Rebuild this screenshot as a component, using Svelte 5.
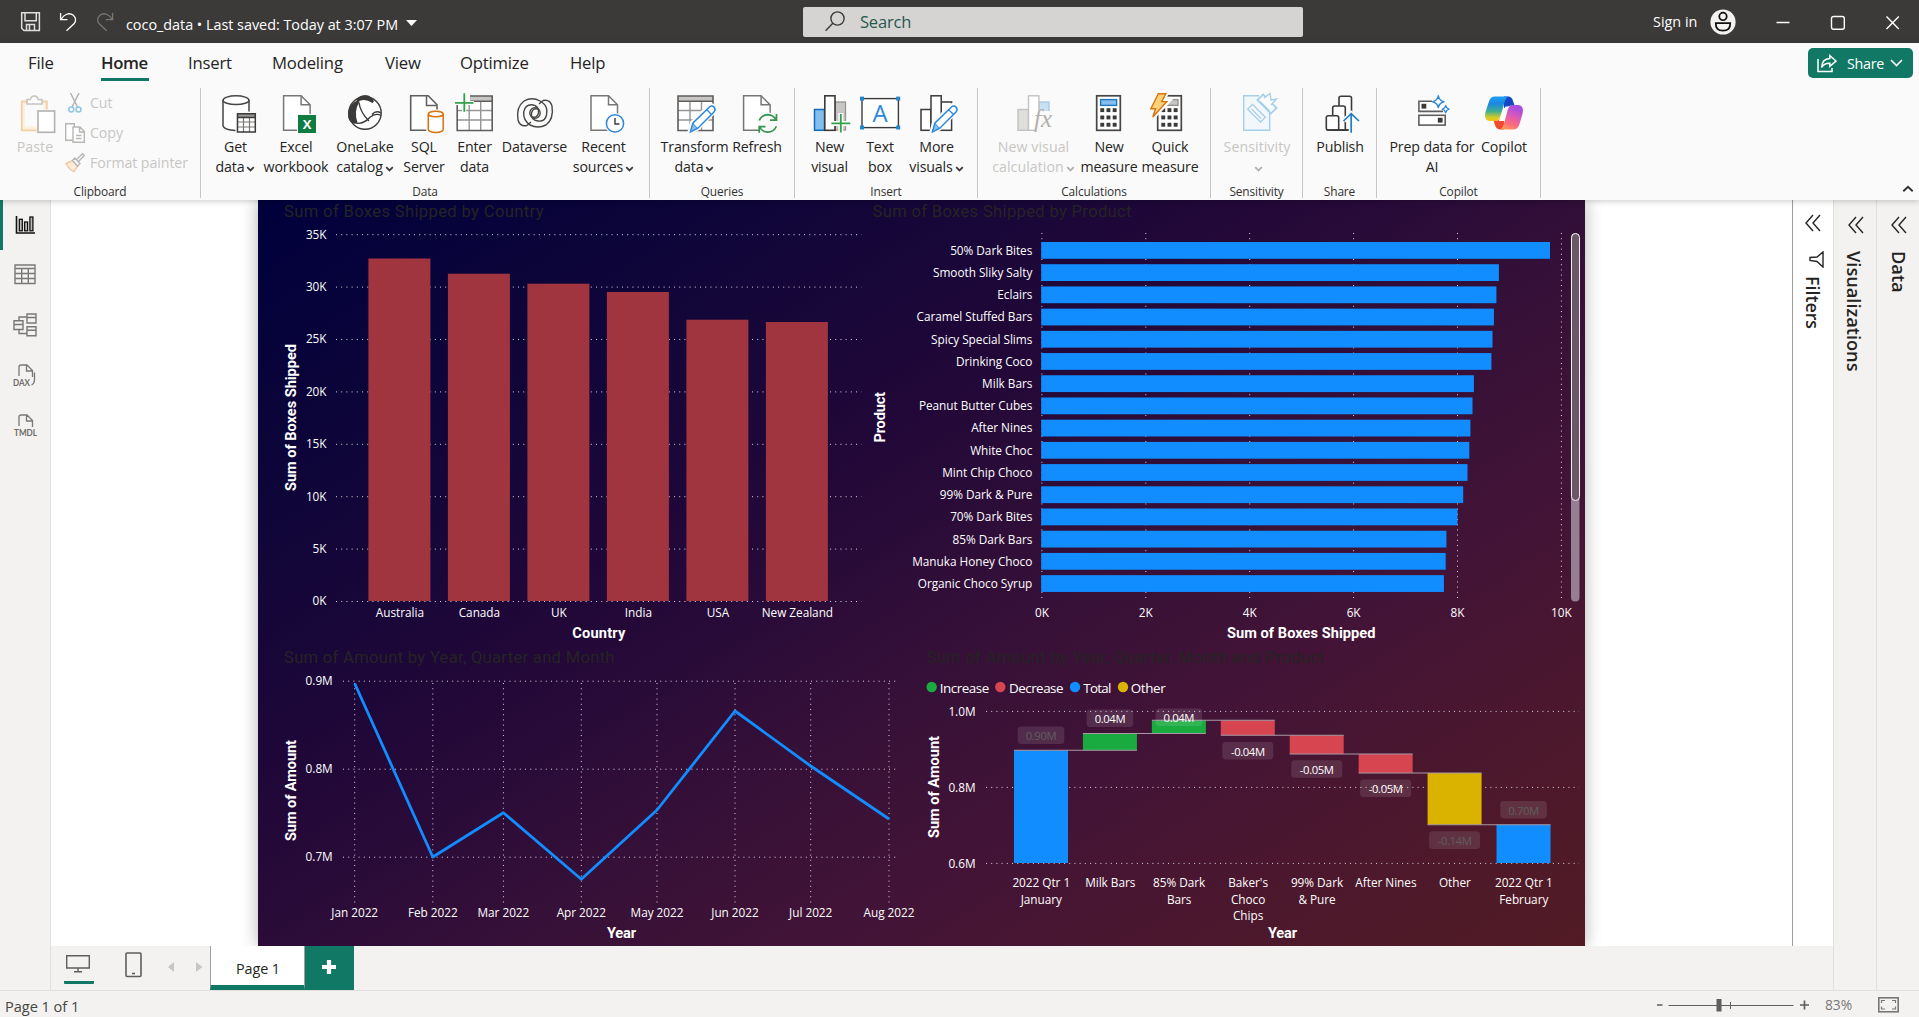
<script>
  const tabs = ['File', 'Home', 'Insert', 'Modeling', 'View', 'Optimize', 'Help'];

  // Ribbon groups: w = group width, pad = left inset, items = [icon, width, line 1, line 2, has menu, disabled]
  const groups = [
    { name: 'Data', w: 449, pad: 7, items: [
      ['getdata', 55, 'Get', 'data', true],
      ['excel', 66, 'Excel', 'workbook'],
      ['onelake', 72, 'OneLake', 'catalog', true],
      ['sql', 46, 'SQL', 'Server'],
      ['enter', 55, 'Enter', 'data'],
      ['dataverse', 65, 'Dataverse', ''],
      ['recent', 73, 'Recent', 'sources', true]
    ] },
    { name: 'Queries', w: 145, pad: 10, items: [
      ['transform', 69, 'Transform', 'data', true],
      ['refresh', 56, 'Refresh', '']
    ] },
    { name: 'Insert', w: 183, pad: 11, items: [
      ['newvisual', 47, 'New', 'visual'],
      ['textbox', 54, 'Text', 'box'],
      ['morevisuals', 59, 'More', 'visuals', true]
    ] },
    { name: 'Calculations', w: 233, pad: 9, items: [
      ['newcalc', 93, 'New visual', 'calculation', true, true],
      ['measure', 58, 'New', 'measure'],
      ['quick', 64, 'Quick', 'measure']
    ] },
    { name: 'Sensitivity', w: 92, pad: 4, items: [['sensitivity', 84, 'Sensitivity', '', true, true]] },
    { name: 'Share', w: 74, pad: 7, items: [['publish', 60, 'Publish', '']] },
    { name: 'Copilot', w: 164, pad: 12, items: [
      ['prep', 86, 'Prep data for', 'AI'],
      ['copilot', 58, 'Copilot', '']
    ] }
  ];

  const countries = [
    ['Australia', 258.5], ['Canada', 273.7], ['UK', 283.7],
    ['India', 292], ['USA', 319.7], ['New Zealand', 322]
  ].map(([name, top], i) => ({ name, top, x: 368.4 + i * 79.5 }));
  const boxTicks = ['35K', '30K', '25K', '20K', '15K', '10K', '5K', '0K'];

  const products = [
    ['50% Dark Bites', 1550], ['Smooth Sliky Salty', 1498.9], ['Eclairs', 1496.4],
    ['Caramel Stuffed Bars', 1493.9], ['Spicy Special Slims', 1492.5], ['Drinking Coco', 1491.4],
    ['Milk Bars', 1473.9], ['Peanut Butter Cubes', 1472.5], ['After Nines', 1470.4],
    ['White Choc', 1469.3], ['Mint Chip Choco', 1467.5], ['99% Dark & Pure', 1463.2],
    ['70% Dark Bites', 1457.5], ['85% Dark Bars', 1446.4], ['Manuka Honey Choco', 1445.7],
    ['Organic Choco Syrup', 1443.9]
  ];
  const prodTicks = ['0K', '2K', '4K', '6K', '8K', '10K'];

  const months = [
    ['Jan 2022', 354.7, 683.5], ['Feb 2022', 432.8, 857], ['Mar 2022', 503.4, 812.7],
    ['Apr 2022', 581.3, 879.3], ['May 2022', 657, 810], ['Jun 2022', 735, 711],
    ['Jul 2022', 810.7, 766], ['Aug 2022', 889, 819]
  ];
  const linePoints = months.map((m) => `${m[1]},${m[2]}`).join(' ');

  const steps = [
    { label: ['2022 Qtr 1', 'January'], top: 750.3, bottom: 863, fill: '#118dff', value: '0.90M', vy: 726.5, dim: true },
    { label: ['Milk Bars'], top: 733.5, bottom: 750.3, fill: '#1aab40', value: '0.04M', vy: 709.5 },
    { label: ['85% Dark', 'Bars'], top: 720.3, bottom: 733.5, fill: '#1aab40', value: '0.04M', vy: 708.5 },
    { label: ["Baker's", 'Choco', 'Chips'], top: 720.3, bottom: 735.3, fill: '#d64550', value: '-0.04M', vy: 742 },
    { label: ['99% Dark', '& Pure'], top: 735.3, bottom: 754, fill: '#d64550', value: '-0.05M', vy: 760.2 },
    { label: ['After Nines'], top: 754, bottom: 773, fill: '#d64550', value: '-0.05M', vy: 779.5 },
    { label: ['Other'], top: 773, bottom: 824.7, fill: '#d9b300', value: '-0.14M', vy: 831.3, dim: true },
    { label: ['2022 Qtr 1', 'February'], top: 824.7, bottom: 863, fill: '#118dff', value: '0.70M', vy: 801, dim: true }
  ].map((s, i) => ({ ...s, x: 1014 + i * 68.93 }));
  const links = [750.3, 733.5, 720.3, 735.3, 754, 773, 824.7];
  const legend = [
    ['Increase', '#1aab40', 931.7, 939.7, 49.5], ['Decrease', '#d64550', 1000.3, 1009, 54.5],
    ['Total', '#118dff', 1075, 1083.3, 28], ['Other', '#d9b300', 1123, 1130.7, 35]
  ];
</script>

{#snippet chev()}
  <svg class="chev" width="9" height="6" viewBox="0 0 9 6"><path d="M1.2 1.2 4.5 4.4 7.8 1.2" fill="none" stroke="currentColor" stroke-width="1.8" /></svg>
{/snippet}

{#snippet doc(x)}
  <path d="M{x} 2.8H{x + 17.5}L{x + 26.5} 11.8V37.3H{x}Z" fill="#fff" stroke="#797775" stroke-width="1.5" />
  <path d="M{x + 17.5} 2.8V11.8H{x + 26.5}" fill="none" stroke="#797775" stroke-width="1.5" />
{/snippet}

{#snippet grid(x)}
  <rect x={x} y="3" width="35" height="34.5" fill="#fff" />
  <rect x={x} y="3" width="35" height="5" fill="#c8c6c4" />
  <path d="M{x} 17.5H{x + 35}M{x} 27H{x + 35}M{x + 12} 8V37M{x + 23.5} 8V37" stroke="#979593" stroke-width="1.4" />
  <path d="M{x} 3H{x + 35}V37.5H{x}ZM{x} 8.2H{x + 35}" fill="none" stroke="#605e5c" stroke-width="1.6" />
{/snippet}

{#snippet pencil()}
  <path d="M13.5 40.5 16.5 29.5 33.5 12.5Q36 10.5 39 13 42 16 39.5 19L23 36Z" fill="#fafafa" stroke="#fafafa" stroke-width="3" />
  <path d="M15.5 38.8 18 30 34.5 14Q37 12 39.2 14.2 41 16.5 39 19L22.5 35.5Z" fill="#fff" stroke="#2b88d8" stroke-width="1.5" />
  <path d="M15.5 38.8 18 30.5 22.3 35.2Z" fill="#83beec" stroke="#2b88d8" />
  <path d="M31.5 16.5 36.5 21.5" stroke="#2b88d8" stroke-width="1.3" />
{/snippet}

{#snippet keys(x)}
  <rect x={x} y="2.8" width="23.6" height="34.5" fill="#fff" stroke="#484644" stroke-width="1.7" />
  {#each [0, 1, 2] as r}
    {#each [0, 1, 2] as c}
      <rect x={x + 3.6 + c * 6.2} y={15.2 + r * 7.3} width="3.9" height="3.9" fill="#3b3a39" />
    {/each}
  {/each}
{/snippet}

{#snippet icon(name)}
  <svg class="ico" width="40" height="40" viewBox="0 0 40 40">
    {#if name === 'getdata'}
      <path d="M7 7V33.5Q9 37.4 19 37.3V18H33V7" fill="#fff" />
      <ellipse cx="20" cy="7.2" rx="13" ry="4.4" fill="#fff" stroke="#484644" stroke-width="1.5" />
      <path d="M7 7V33Q8.5 37 19.5 37.4M33 7V18.6" fill="none" stroke="#484644" stroke-width="1.5" />
      <rect x="21.5" y="20.7" width="18" height="18.3" fill="#fff" /><rect x="21.5" y="20.7" width="18" height="3.6" fill="#979593" />
      <path d="M21.5 29H39.5M21.5 34H39.5M27.5 24V39M33.5 24V39" stroke="#797775" stroke-width="1.2" />
      <path d="M21.5 20.7H39.3V39H21.5ZM21.5 24.6H39.5" fill="none" stroke="#3b3a39" stroke-width="1.5" />
    {:else if name === 'excel'}
      {@render doc(7.6)}
      <rect x="21" y="21" width="19" height="19" fill="#fafafa" /><rect x="22" y="22" width="18" height="18" fill="#107c41" />
      <text x="31" y="35.6" class="gx">X</text>
    {:else if name === 'onelake'}
      <circle cx="20" cy="20" r="16.2" fill="#fff" stroke="#3b3a39" stroke-width="1.4" />
      <path d="M11.5 7Q14 2.2 20 2 27 2.5 29 8.5L27.5 10Q19 4.5 12.5 9Z" fill="#3b3a39" />
      <path d="M12 7.5Q2 12 3.2 24.5 5 31.5 11.5 30.5L12.5 29.8Q8.5 18.5 14.5 8.5Z" fill="#3b3a39" />
      <path d="M14 9.5Q15 19 24 28M36.2 22.5Q30.5 19.5 25 24.3 19 31 11.5 30.3M36 20Q31 17 27 21.5" fill="none" stroke="#3b3a39" stroke-width="1.4" />
    {:else if name === 'sql'}
      <path d="M6.7 2.8H24.2L33 11.8V37.3H6.7Z" fill="#fff" stroke="#605e5c" stroke-width="1.6" />
      <path d="M22.5 2.8V12.5H32.5" fill="none" stroke="#605e5c" stroke-width="1.5" />
      <rect x="22.2" y="16.5" width="18" height="24" fill="#fafafa" />
      <path d="M24.3 21V36.5Q25 39.3 31.7 39.4 38.6 39.3 39.2 36.5V21" fill="#fff" stroke="#d8730c" stroke-width="1.5" />
      <ellipse cx="31.8" cy="21" rx="7.4" ry="2.8" fill="#fff" stroke="#d8730c" stroke-width="1.5" />
    {:else if name === 'enter'}
      {@render grid(2.2)}
      <rect x="-1" y="-1" width="16" height="10.5" fill="#fafafa" /><rect x="-1" y="8" width="20" height="4" fill="#fafafa" /><rect x="7.2" y="8" width="4" height="11" fill="#fafafa" />
      <path d="M9.3 .3V18.7M0 9.8H18.5" stroke="#33a04c" stroke-width="1.8" />
    {:else if name === 'dataverse'}
      <g fill="none" stroke="#484644" stroke-width="1.4">
        <path d="M12 32.5Q5 34 3 27 1 14 9 8 17 3.5 25 8L28.5 10.5Q33 14 31.5 22 30 29 23 28 15.5 27 16.5 20 18 14.5 23 16" />
        <path d="M28 7.5Q35 6 37 13 39 26 31 32 23 36 15 32 8 27 8.7 19 10 11.5 17 11.8 24.5 13 23.5 20 22 25.5 17 24" />
        <circle cx="20" cy="20" r="5.2" /><path d="M12 32.5 16 29M28 7.5 24 11" />
      </g>
    {:else if name === 'recent'}
      {@render doc(7)}
      <circle cx="31" cy="30.4" r="10.5" fill="#fafafa" /><circle cx="31" cy="30.4" r="8.6" fill="#fff" stroke="#2b88d8" stroke-width="1.5" />
      <path d="M31 25V31H35.5" fill="none" stroke="#3b3a39" stroke-width="1.4" />
    {:else if name === 'transform'}
      {@render grid(3)}{@render pencil()}
    {:else if name === 'refresh'}
      {@render doc(6.6)}
      <circle cx="30.8" cy="30.4" r="11" fill="#fafafa" />
      <g fill="none" stroke="#33964c" stroke-width="1.7"><path d="M22.3 27.5Q24.5 21.8 30.8 21.6 36.5 22 39 26.8M39.5 21V27.2H33M39.4 33.2Q37 39 30.8 39.2 25 39 22.6 34M22.2 39.8V33.6H28.5" /></g>
    {:else if name === 'newvisual'}
      <rect x="4.5" y="16.5" width="10" height="20.8" fill="#83beec" stroke="#0f6cbd" stroke-width="1.5" />
      <rect x="25" y="9" width="10.5" height="28" fill="#c8c6c4" stroke="#979593" stroke-width="1.3" />
      <rect x="14.8" y="2.8" width="10.2" height="34.5" fill="#fff" stroke="#3b3a39" stroke-width="1.6" />
      <path d="M30.8 20V40M21 30.4H41" stroke="#fafafa" stroke-width="5" /><path d="M30.8 21V39.6M21.4 30.4H40.3" stroke="#33a04c" stroke-width="1.8" />
    {:else if name === 'textbox'}
      <rect x="2" y="5.6" width="36.4" height="29" fill="#fff" stroke="#3b3a39" stroke-width="1.4" />
      <g fill="#1f87cf"><rect x="0" y="3.6" width="4" height="4" /><rect x="36.2" y="3.6" width="4" height="4" /><rect x="0" y="32.5" width="4" height="4" /><rect x="36.2" y="32.5" width="4" height="4" /></g>
      <text x="20" y="28.5" class="ga">A</text>
    {:else if name === 'morevisuals'}
      <g fill="#fff" stroke="#3b3a39" stroke-width="1.5"><rect x="4" y="16.5" width="10" height="20.8" /><rect x="24.2" y="9" width="10.4" height="28.3" /><rect x="14" y="2.8" width="10.2" height="34.5" /></g>
      {@render pencil()}
    {:else if name === 'newcalc'}
      <rect x="4" y="16.5" width="10.5" height="20.8" fill="#dfdedd" stroke="#c4c2c0" stroke-width="1.4" />
      <rect x="25" y="9" width="10" height="10" fill="#c7e0f4" stroke="#a6cdeb" stroke-width="1.4" />
      <rect x="14.5" y="2.8" width="10.4" height="34.5" fill="#fff" stroke="#c4c2c0" stroke-width="1.4" />
      <rect x="22.5" y="18" width="16" height="20" fill="#fafafa" /><text x="20" y="34" class="gf">fx</text>
    {:else if name === 'measure'}
      {@render keys(7.7)}
      <rect x="11.6" y="6.6" width="16" height="5.8" fill="#83beec" stroke="#1f78be" stroke-width="1.4" />
    {:else if name === 'quick'}
      {@render keys(7.7)}
      <rect x="14" y="6.6" width="14" height="5.8" fill="#c8c6c4" stroke="#979593" stroke-width="1.4" />
      <path d="M8.3 .8H16L11.7 8.6H17.5L2.5 24.5 5.5 15.8H.8Z" fill="#fafafa" stroke="#fafafa" stroke-width="5" />
      <path d="M8.3 .8H15.8L11.7 8.6H16.7L2.8 24 5.5 15.8H.9Z" fill="#fbd27a" stroke="#d8730c" stroke-width="1.4" />
    {:else if name === 'sensitivity'}
      <g fill="#fafafa" stroke="#a6d0ea" stroke-width="1.4">
        <path d="M22 2.8H6.7V37.3H32.7V19" fill="#f1f7fb" />
        <rect x="-9" y="-3.4" width="18" height="6.8" transform="translate(19.5 20.3) rotate(45)" /><path d="M14.5 16 24 25.5" />
        <rect x="-9.5" y="-4" width="19" height="8" transform="translate(30 11) rotate(45)" stroke-width="1.8" />
        <path d="M22.7 8.3 32.5 18M27 5 33 .5 34 7 39.5 6 34 12" />
      </g>
    {:else if name === 'publish'}
      <g fill="#fff" stroke="#3b3a39" stroke-width="1.6"><path d="M19 37V5Q19 3.2 21 3.2H29.5Q31.5 3.2 31.5 5V37Z" /><path d="M12.7 37V15Q12.7 13 14.7 13H23.3Q25.3 13 25.3 15V37Z" /><path d="M6.3 35V24.5Q6.3 22.7 8.3 22.7H16.7Q18.7 22.7 18.7 24.5V37H8.3Q6.3 37 6.3 35Z" /><path d="M6.5 37H31" /></g>
      <path d="M31.2 21V40M24 27.8 31.2 20.7 38.5 27.8" stroke="#fafafa" stroke-width="5" fill="none" /><path d="M31.2 21V39.7M23.5 28 31.2 20.7 39 28" stroke="#1f7fc0" stroke-width="1.7" fill="none" />
    {:else if name === 'prep'}
      <g fill="#fff" stroke="#605e5c" stroke-width="1.6"><path d="M20 8.2H6.9V18.4H31" /><rect x="6.9" y="22.3" width="26.3" height="9.8" /></g>
      <rect x="9.5" y="10.8" width="4.8" height="4.8" fill="#3b3a39" /><rect x="25.8" y="24.8" width="4.8" height="4.8" fill="#3b3a39" />
      <g fill="#fff" stroke="#2b88d8" stroke-width="1.4" stroke-linejoin="round"><path d="M26.3 2.8Q27.3 7.6 32 8.7 27.3 9.9 26.3 14.5 25.3 9.9 20.6 8.7 25.3 7.6 26.3 2.8Z" /><path d="M33.7 12.7Q34.3 15.5 37 16.2 34.3 17 33.7 19.7 33 17 30.4 16.2 33 15.5 33.7 12.7Z" /></g>
    {:else}
      <defs>
        <linearGradient id="ca" x1="0" y1="0" x2="0" y2="1"><stop offset="0" stop-color="#1f9df2" /><stop offset=".3" stop-color="#1c87e0" /><stop offset=".6" stop-color="#3fae8f" /><stop offset=".85" stop-color="#cfcb2b" /><stop offset="1" stop-color="#f5c60c" /></linearGradient>
        <linearGradient id="cb" x1=".4" y1="0" x2="0" y2="1"><stop offset="0" stop-color="#a84fe0" /><stop offset=".35" stop-color="#df5bb4" /><stop offset=".65" stop-color="#fb6c7b" /><stop offset="1" stop-color="#fbab4c" /></linearGradient>
      </defs>
      <path d="M20 3.5H24Q28 3.5 29 8L30.5 12.5H27L20 15Z" fill="#1546c4" /><path d="M20 36.5H16Q12 36 11 32L9.5 27.5H13L20 25Z" fill="#ef4b31" />
      <path d="M29 36.5H15.5C18.5 36.5 19.5 32 21 27L23.5 17.5C24.5 13.5 26 12 29 12H34C38.5 12 39.8 16 38.5 21L35.5 31C34.3 34.7 32.5 36.5 29 36.5Z" fill="url(#cb)" />
      <path d="M11 3.5H25.5C22 3.5 20.8 8 19.5 13L16.5 23C15.5 26.5 14 28 11 28H6C1.5 28 .3 24 1.5 19L4.8 9C6 5.3 7.5 3.5 11 3.5Z" fill="url(#ca)" />
      <path d="M21.5 13.5H25.5Q24 14.5 23 18L20 28H14.5Q16.3 27 17.3 23.5Z" fill="#fafafa" />
    {/if}
  </svg>
{/snippet}

<div class="app">
  <header class="titlebar">
    <div class="tleft">
      <svg width="120" height="43" viewBox="0 0 120 43" fill="none" stroke="#fff" stroke-width="1.3">
        <path d="M21.7 12.7H39.4V30.5H24L21.7 28.2ZM25 13V20.8H36.3V13M26.5 30.5V24.5H34.5V30.5M29.5 25V30" stroke="#e1dfdd" stroke-width="1.5" />
        <path d="M60.6 13V19.6H67.5M61 19.3C64 14.5 69 12 73.3 15.2 77 18.8 75.8 21.5 74 23.8L66.5 30.8" />
        <path d="M112.6 13V19.6H105.7M112.2 19.3C109.2 14.5 104.2 12 99.9 15.2 96.2 18.8 97.4 21.5 99.2 23.8L106.7 30.8" stroke="#797775" />
      </svg>
      <span class="fname">coco_data • Last saved: Today at 3:07 PM</span>
      <svg class="caret" width="11" height="6"><path d="M0 0H11L5.5 6Z" fill="#fff" /></svg>
    </div>
    <div class="search">
      <svg width="20" height="21" viewBox="0 0 20 21" fill="none" stroke="#3b3a39" stroke-width="1.4"><circle cx="12.5" cy="7.5" r="6.6" /><path d="M7.8 12.2.6 19.8" /></svg>
      <span>Search</span>
    </div>
    <div class="tright">
      <span class="sign">Sign in</span>
      <svg width="26" height="26" viewBox="0 0 26 26"><circle cx="13" cy="13" r="12.6" fill="#f3f2f1" /><g fill="none" stroke="#111" stroke-width="1.8"><circle cx="13" cy="7.4" r="3.7" /><path d="M5.8 14.2H20.2Q20.5 21.7 13 21.7 5.5 21.7 5.8 14.2Z" /></g></svg>
      <svg class="wins" width="124" height="16" viewBox="0 0 124 16" fill="none" stroke="#fff" stroke-width="1.4"><path d="M.5 7.5H13.5M110.5 1.5 122.8 14M122.8 1.5 110.5 14" /><rect x="55.5" y="1.5" width="12.8" height="12.8" rx="2" /></svg>
    </div>
  </header>

  <section class="ribbon">
    <div class="tabrow">
      <nav class="tabs">
        {#each tabs as tab}
          <span class="tab" class:active={tab === 'Home'}><b>{tab}</b></span>
        {/each}
      </nav>
      <button class="share">
        <svg width="20" height="19" viewBox="0 0 20 19" fill="none" stroke="#fff" stroke-width="1.5"><path d="M1 5V17.5H15V14M12.8 1.5 19 7 12.8 12.3V9.3Q7 9 4.6 13.5 5 5 12.8 4.6Z" /></svg>
        <span>Share</span>
        <svg width="13" height="8" viewBox="0 0 13 8" fill="none" stroke="#fff" stroke-width="1.6"><path d="M1 1 6.5 6.5 12 1" /></svg>
      </button>
    </div>
    <div class="groups">
      <div class="group clip">
        <div class="cliprow">
          <div class="btn off paste">
            <svg class="ico" width="40" height="40" viewBox="0 0 40 40"><path d="M6.8 8.5H31.8V37.3H6.8Z" fill="#fbf1dc" stroke="#f3cfa5" stroke-width="1.8" /><rect x="10" y="11" width="18.5" height="22.5" fill="#fafafa" /><path d="M12 11V6.5H15.5Q16 3 19.3 3 22.6 3 23 6.5H27V11Z" fill="#fff" stroke="#c4c2c0" stroke-width="1.5" /><rect x="21.5" y="16.5" width="19" height="23" fill="#fafafa" /><rect x="23" y="18" width="16.6" height="21.3" fill="#fff" stroke="#b3b0ad" stroke-width="1.6" /></svg>
            <span>Paste</span>
          </div>
          <div class="clipcol">
            <div><svg width="20" height="20" viewBox="0 0 20 20" fill="none"><path d="M5.5 0 12.5 14M14 0 7 14" stroke="#b3b0ad" stroke-width="1.4" /><circle cx="6.3" cy="16.5" r="2.5" stroke="#92c5e6" stroke-width="1.5" /><circle cx="13.5" cy="16.5" r="2.5" stroke="#92c5e6" stroke-width="1.5" /></svg>Cut</div>
            <div><svg width="20" height="20" viewBox="0 0 20 20" fill="#fff" stroke="#b8b6b4" stroke-width="1.4"><path d="M8 17.3H.7V.8H9.3V4" /><path d="M8 4H15L19.3 8.5V19.3H8ZM14.5 4V9H19.3M11 12.5H16.5M11 15.5H16.5" /></svg>Copy</div>
            <div><svg width="20" height="20" viewBox="0 0 20 20" fill="none" stroke="#b8b6b4" stroke-width="1.4"><path d="M1 10.5 7.5 7.5 12.5 13.3 9 18.7Q3.5 16 1 10.5Z" fill="#fdebd5" stroke="#f0c9a2" /><path d="M7.5 7.5 9.8 5 15 10.5 12.5 13.3ZM11.5 6.5 17.5.8 19.3 2.5 13.5 8.5" /></svg>Format painter</div>
          </div>
        </div>
        <footer>Clipboard</footer>
      </div>
      {#each groups as g}
        <div class="group" style:width="{g.w}px">
          <div class="items" style:padding-left="{g.pad}px">
            {#each g.items as [ic, w, a, b, menu, off]}
              <div class="btn" class:off style:width="{w}px">
                {@render icon(ic)}
                <span>{a}</span>
                <span>{b}{#if menu}{@render chev()}{/if}</span>
              </div>
            {/each}
          </div>
          <footer>{g.name}</footer>
        </div>
      {/each}
      <svg class="collapse" width="12" height="8" viewBox="0 0 12 8"><path d="M1.3 6.3 6 1.8 10.7 6.3" fill="none" stroke="#323130" stroke-width="1.9" /></svg>
    </div>
  </section>

  <div class="body">
    <aside class="rail">
      <div class="on"><svg width="24" height="24" viewBox="0 0 24 24" fill="none" stroke="#111" stroke-width="1.3"><path d="M3.5 3V20H22" stroke-width="1.6" /><g fill="#bebbb8"><rect x="6.3" y="6.3" width="3" height="11.5" /><rect x="11.6" y="9" width="3" height="8.8" /><rect x="16.9" y="4" width="3" height="13.8" /></g></svg></div>
      <div><svg width="24" height="24" viewBox="0 0 24 24" fill="none" stroke="#7a7876" stroke-width="1.4"><path d="M2 2H22V20.5H2ZM2 5.5H22M2 10.5H22M2 15.5H22M8.7 5.5V20.5M15.3 5.5V20.5" /></svg></div>
      <div><svg width="24" height="24" viewBox="0 0 24 24" fill="none" stroke="#7a7876" stroke-width="1.4"><path d="M1 7.7H10V16.5H1ZM1 11.5H10M14 1H23V10H14ZM14 4.5H23M14 13.7H23V22.7H14ZM14 17.3H23M6 7.5V4H14M6 16.5V20.5H14" /></svg></div>
      <div><svg width="26" height="24" viewBox="0 0 26 24" fill="none" stroke="#7a7876" stroke-width="1.3"><path d="M6 13V4Q6 2 8 2H14L19.5 7.5V14M13.5 2V8H19.5M21.5 9.5V17Q21.5 20.5 18.5 22" /><text x="0" y="22.6" textLength="17" lengthAdjust="spacingAndGlyphs">DAX</text></svg></div>
      <div><svg width="26" height="24" viewBox="0 0 26 24" fill="none" stroke="#7a7876" stroke-width="1.3"><path d="M6 13V4Q6 2 8 2H14L19.5 7.5V14M13.5 2V8H19.5" /><text x="1" y="22.6" textLength="23" lengthAdjust="spacingAndGlyphs">TMDL</text></svg></div>
    </aside>

    <main class="center">
      <div class="work">
        <div class="stage">
          <div class="report">
            <div class="rowtop">
              <svg width="610" height="442" viewBox="258 200 610 442">
                <text class="title" x="284" y="217" textLength="259.5">Sum of Boxes Shipped by Country</text>
                {#each boxTicks as t, i}
                  <path class="dots" d="M336 {234.7 + i * 52.4}H861.5" />
                  <text class="lab end" x="326.5" y={238.6 + i * 52.4}>{t}</text>
                {/each}
                {#each countries as c}
                  <rect x={c.x} y={c.top} width="62" height={601 - c.top} fill="#a0343f" />
                  <text class="lab mid" x={c.x + 31.5} y="616.8">{c.name}</text>
                {/each}
                <text class="axis" x="572.3" y="637.5" textLength="53">Country</text>
                <text class="axis" transform="translate(295.7 491) rotate(-90)" textLength="147">Sum of Boxes Shipped</text>
              </svg>
              <svg width="717" height="442" viewBox="868 200 717 442">
                <text class="title" x="872.5" y="217" textLength="259">Sum of Boxes Shipped by Product</text>
                {#each prodTicks as t, i}
                  <path class="dots" d="M{1041.9 + i * 103.9} 233V602" />
                  <text class="lab mid" x={1041.9 + i * 103.9} y="616.8">{t}</text>
                {/each}
                {#each products as [name, end], i}
                  <rect x="1041.2" y={242 + i * 22.21} width={end - 1041.2} height="16.8" fill="#118dff" />
                  <text class="lab end" x="1032.3" y={254.8 + i * 22.21}>{name}</text>
                {/each}
                <rect x="1571" y="233.5" width="8.5" height="368" rx="4" fill="#957f92" />
                <rect x="1571.5" y="233.5" width="8" height="267" rx="4" fill="#6a5767" stroke="#f3f2f1" />
                <text class="axis" x="1227" y="637.5" textLength="148.5">Sum of Boxes Shipped</text>
                <text class="axis" transform="translate(884.7 442.5) rotate(-90)" textLength="50.5">Product</text>
              </svg>
            </div>
            <div class="rowbot">
              <svg width="662" height="304" viewBox="258 642 662 304">
                <text class="title" x="284" y="663" textLength="330.5">Sum of Amount by Year, Quarter and Month</text>
                {#each ['0.9M', '0.8M', '0.7M'] as t, i}
                  <path class="dots" d="M343 {681.2 + i * 88}H899" />
                  <text class="lab end" x="332.7" y={685 + i * 88}>{t}</text>
                {/each}
                {#each months as [m, x]}
                  <path class="dots" d="M{x} 683V904" />
                  <text class="lab mid" {x} y="917.2">{m}</text>
                {/each}
                <polyline points={linePoints} fill="none" stroke="#118dff" stroke-width="2.8" stroke-linejoin="round" />
                <text class="axis" x="607" y="938.3" textLength="29">Year</text>
                <text class="axis" transform="translate(295.7 841) rotate(-90)" textLength="101">Sum of Amount</text>
              </svg>
              <svg width="665" height="304" viewBox="920 642 665 304">
                <text class="title" x="926.5" y="663" textLength="398">Sum of Amount by Year, Quarter, Month and Product</text>
                {#each legend as [name, color, cx, tx, len]}
                  <circle {cx} cy="687" r="5.2" fill={color} />
                  <text class="leg" x={tx} y="693" textLength={len}>{name}</text>
                {/each}
                {#each ['1.0M', '0.8M', '0.6M'] as t, i}
                  <path class="dots" d="M986 {711.4 + i * 76}H1579" />
                  <text class="lab end" x="975.5" y={715.6 + i * 76}>{t}</text>
                {/each}
                {#each steps as s}
                  <rect x={s.x} y={s.top} width="54" height={s.bottom - s.top} fill={s.fill} />
                {/each}
                {#each links as y, i}
                  <path d="M{steps[i].x} {y}H{steps[i + 1].x + 54}" stroke="#a79aa4" stroke-width="1.1" />
                {/each}
                {#each steps as s}
                  <rect x={s.x + 27 - (s.value.length > 5 ? 25.5 : 23.3)} y={s.vy} width={s.value.length > 5 ? 51 : 46.6} height="17.6" rx="3.5" fill="#fff" fill-opacity=".11" />
                  <text class="val mid" class:dim={s.dim} x={s.x + 27} y={s.vy + 13.5}>{s.value}</text>
                  {#each s.label as line, j}
                    <text class="lab mid" x={s.x + 27.3} y={887.2 + j * 16.6}>{line}</text>
                  {/each}
                {/each}
                <text class="axis" x="1268" y="938.3" textLength="29">Year</text>
                <text class="axis" transform="translate(938.8 838) rotate(-90)" textLength="102">Sum of Amount</text>
              </svg>
            </div>
          </div>
        </div>
        <aside class="filters">
          <svg width="16" height="18" viewBox="0 0 16 18" fill="none" stroke="#252423" stroke-width="1.4"><path d="M8 1 1 9 8 17M15 1 8 9 15 17" /></svg>
          <svg class="funnel" width="15" height="17" viewBox="0 0 15 17" fill="none" stroke="#252423" stroke-width="1.4"><path d="M14 1V16L8 10.5 1 9.5V6.5L8 6Z" /></svg>
          <span>Filters</span>
        </aside>
      </div>
      <div class="pages">
        <div class="view sel"><svg width="24" height="18" viewBox="0 0 24 18" fill="none" stroke="#605e5c" stroke-width="1.4"><path d="M.7 .7H23.3V13H.7ZM12 13V16.7M8 16.7H16" /></svg></div>
        <div class="view"><svg width="17" height="26" viewBox="0 0 17 26" fill="none" stroke="#605e5c" stroke-width="1.6"><rect x="1" y="1" width="15" height="23.5" rx="1" /><path d="M7 21.5H10" /></svg></div>
        <svg class="arrows" width="36" height="12"><path d="M6 1V11L0 6Z" fill="#c8c6c4" /><path d="M28 1V11L34.5 6Z" fill="#c8c6c4" /></svg>
        <div class="page">Page 1</div>
        <div class="add"><svg width="14" height="14"><path d="M7 0V14M0 7H14" stroke="#fff" stroke-width="4.2" /></svg></div>
      </div>
    </main>

    <aside class="pane vis">
      <svg width="16" height="18" viewBox="0 0 16 18" fill="none" stroke="#252423" stroke-width="1.4"><path d="M8 1 1 9 8 17M15 1 8 9 15 17" /></svg>
      <span>Visualizations</span>
    </aside>
    <aside class="pane data">
      <svg width="16" height="18" viewBox="0 0 16 18" fill="none" stroke="#252423" stroke-width="1.4"><path d="M8 1 1 9 8 17M15 1 8 9 15 17" /></svg>
      <span>Data</span>
    </aside>
  </div>

  <footer class="status">
    <span>Page 1 of 1</span>
    <div class="zoom">
      <svg width="152" height="14" viewBox="0 0 152 14" stroke="#605e5c" fill="none"><path d="M0 7H5.5M143 7H152M147.5 2.5V11.5" stroke-width="1.7" /><path d="M11.5 7.5H136.5M73.5 4V11" /><rect x="59.5" y="1" width="5" height="12.5" fill="#605e5c" stroke="none" /></svg>
      <span>83%</span>
      <svg width="21" height="16" viewBox="0 0 21 16" fill="none" stroke="#797775"><rect x=".8" y=".8" width="19.4" height="14" stroke-width="1.6" /><path d="M3.5 6V3.5H7M14 3.5H17.5V6M17.5 9.5V12H14M7 12H3.5V9.5" stroke-width="1.2" /></svg>
    </div>
  </footer>
</div>

<style>
  :global(body) { margin: 0; overflow: hidden; }
  .app { width: 1919px; height: 1017px; display: flex; flex-direction: column; font-family: 'Open Sans', 'Noto Sans', sans-serif; color: #252423; background: #f3f2f1; overflow: hidden; }
  svg { display: block; flex: none; }
  span { white-space: nowrap; }

  .titlebar { height: 43px; flex: none; background: #3b3a38; color: #fff; display: flex; align-items: center; }
  .tleft { width: 803px; display: flex; align-items: center; }
  .fname { margin-left: 6px; margin-top: 6px; font-size: 14.4px; letter-spacing: -.02px; width: 272px; }
  .caret { margin-left: 8px; margin-top: 3px; }
  .search { width: 500px; height: 30px; box-sizing: border-box; padding-left: 22px; border-radius: 2px; background: #d5d4d2; display: flex; align-items: center; gap: 15px; color: #27584f; font-size: 16.5px; letter-spacing: -.2px; }
  .tright { flex: 1; padding-left: 350px; display: flex; align-items: center; }
  .sign { width: 57px; font-size: 14.4px; letter-spacing: 0; }
  .wins { margin-left: 40px; margin-top: 2px; }

  .ribbon { height: 157px; flex: none; background: #fafafa; box-shadow: 0 1px 6px rgba(0, 0, 0, .22); position: relative; z-index: 2; }
  .tabrow { height: 45px; display: flex; }
  .tabs { width: 1808px; display: grid; grid-template-columns: 73px 87px 84px 113px 75px 110px 80px; padding-left: 28px; box-sizing: border-box; }
  .tab { font-size: 16.7px; letter-spacing: -.2px; line-height: 22px; padding-top: 9px; }
  .tab b { display: inline-block; font-weight: 400; padding-bottom: 4px; }
  .tab.active b { font-weight: 600; letter-spacing: -.35px; border-bottom: 3px solid #117865; width: 48px; }
  .share { margin-top: 5px; width: 105px; height: 30px; padding: 0 0 0 9px; border: 0; border-radius: 5px; background: #117865; color: #fff; display: flex; align-items: center; font: 500 14.3px 'Open Sans', sans-serif; }
  .share span { width: 37px; margin: 0 6px 0 10px; letter-spacing: -.3px; }
  .groups { display: flex; height: 110px; }
  .group { box-sizing: border-box; height: 110px; border-right: 1px solid #c8c6c4; display: flex; flex-direction: column; }
  .group footer { text-align: center; font-size: 11.9px; letter-spacing: -.12px; line-height: 18px; color: #323130; }
  .items, .cliprow { display: flex; height: 94px; padding-top: 5px; box-sizing: border-box; }
  .btn { flex: none; display: flex; flex-direction: column; align-items: center; font-size: 14.2px; letter-spacing: -.15px; line-height: 20px; height: 90px; }
  .btn .ico { margin-bottom: 4px; overflow: visible; }
  .btn span { display: flex; align-items: center; height: 20px; }
  .btn.off { color: #c8c6c4; letter-spacing: .05px; }
  .chev { margin: 3px 0 0 2px; color: #3b3a39; }
  .off .chev { color: #b3b0ad; }
  .clip { width: 201px; }
  .clip .paste { width: 40px; margin-left: 15px; }
  .clipcol { margin-left: 10px; color: #c8c6c4; font-size: 14.2px; letter-spacing: -.08px; }
  .clipcol div { height: 30px; line-height: 20px; display: flex; gap: 5px; }
  .collapse { margin: 97px 0 0 361px; }
  .gx { font: 700 13px 'Open Sans', sans-serif; fill: #fff; text-anchor: middle; }
  .ga { font: 400 24px 'Open Sans', sans-serif; fill: #2b88d8; text-anchor: middle; }
  .gf { font: italic 25px 'Liberation Serif', serif; fill: #b3b0ad; }

  .body { height: 790px; flex: none; display: flex; }
  .rail { width: 51px; box-sizing: border-box; border-right: 1px solid #e1dfdd; }
  .rail div { height: 50px; padding-left: 13px; box-sizing: border-box; display: flex; align-items: center; }
  .rail .on { border-left: 3px solid #117865; padding-left: 10px; }
  .rail text { font: 700 9px Lato, sans-serif; fill: #6f6d6b; stroke: none; }

  .center { width: 1782px; display: flex; flex-direction: column; }
  .work { height: 746px; display: flex; }
  .stage { width: 1741px; background: #fff; padding-left: 207px; box-sizing: border-box; overflow: hidden; }
  .report { width: 1327px; height: 746px; box-shadow: 0 0 16px rgba(0, 0, 0, .3); background: linear-gradient(148deg, #00003c 0%, #0d0539 18%, #220838 40%, #351038 56%, #441436 72%, #4c182c 86%, #521b24 100%); }
  .rowtop, .rowbot { display: flex; }
  .title { font: 400 16.6px Roboto, sans-serif; fill: #252423; }
  .lab { font: 500 11.8px 'Open Sans', sans-serif; letter-spacing: -.03px; fill: #fff; }
  .end { text-anchor: end; }
  .mid { text-anchor: middle; }
  .val { font: 500 11.3px 'Open Sans', sans-serif; letter-spacing: -.4px; fill: #fff; }
  .dim { fill: #605e5c; }
  .leg { font: 400 13.4px 'Open Sans', sans-serif; fill: #fff; }
  .axis { font: 700 14.6px Roboto, sans-serif; fill: #fff; }
  .dots { stroke: #d6cfd8; stroke-width: 1; stroke-dasharray: 1.04 4.16; fill: none; }

  .filters, .pane { box-sizing: border-box; display: flex; flex-direction: column; }
  .filters { width: 41px; background: #fff; border-left: 1px solid #a19f9d; padding: 14px 0 0 12px; }
  .filters span, .pane span { writing-mode: vertical-rl; font-size: 18.2px; font-weight: 600; letter-spacing: 0; line-height: 22px; width: 22px; align-self: flex-start; }
  .funnel { margin: 19px 0 0 4px; }
  .filters span { margin: 8px 0 0 -3px; font-size: 17.8px; }
  .pane { width: 43px; border-left: 1px solid #e1dfdd; padding: 16px 0 0 14px; }
  .pane span { margin: 17px 0 0 -5px; }
  .pane.data span { margin-left: -3px; }

  .pages { height: 44px; display: flex; }
  .view { width: 30px; margin-left: 13px; box-sizing: border-box; height: 38px; padding: 9px 0 0 2px; }
  .view.sel { border-bottom: 3px solid #117865; border-radius: 1px; }
  .view + .view { margin-left: 31px; padding: 6px 0 0 0; }
  .arrows { margin: 15px 4px 0 13px; }
  .page { margin-left: 2px; box-sizing: border-box; width: 95px; height: 44px; padding-left: 1px; background: #fff; border-left: 1px solid #a19f9d; border-right: 1px solid #a19f9d; border-bottom: 5px solid #117865; text-align: center; font-size: 14.4px; letter-spacing: -.1px; line-height: 45px; }
  .add { width: 49px; height: 44px; background: #117865; display: flex; align-items: center; justify-content: center; padding: 0 1px 2px 0; box-sizing: border-box; }

  .status { height: 27px; box-sizing: border-box; border-top: 1px solid #e1dfdd; display: flex; justify-content: space-between; align-items: center; padding: 3px 20px 0 5px; color: #484644; font-size: 14.6px; letter-spacing: -.05px; }
  .zoom { display: flex; align-items: center; margin-top: -2px; }
  .zoom span { padding-left: 16px; width: 53px; font-size: 13.8px; color: #797775; }
</style>
